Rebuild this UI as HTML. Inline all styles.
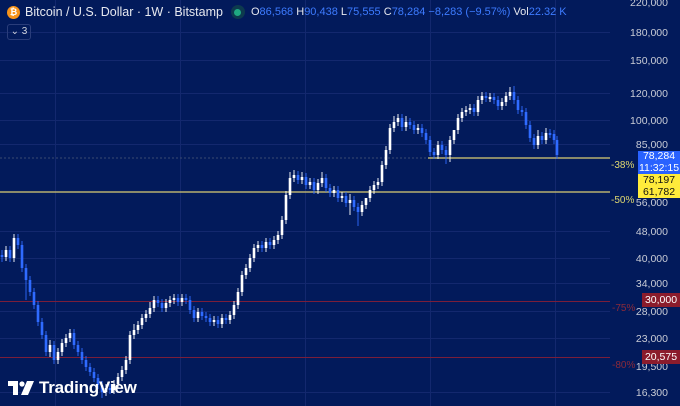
<!DOCTYPE html>
<html><head><meta charset="utf-8"><style>
html,body{margin:0;padding:0}
body{width:680px;height:406px;background:#021a5b;position:relative;overflow:hidden;font-family:"Liberation Sans","DejaVu Sans",sans-serif;color:#d1d4dc}
.hdr{position:absolute;left:7px;top:5px;font-size:12.5px;color:#e6e8ef;white-space:nowrap;display:flex;align-items:center}
.coin{width:13px;height:13px;border-radius:50%;background:#f7931a;color:#fff;font-size:9px;font-weight:bold;text-align:center;line-height:13px;margin-right:5px}
.dot{width:14px;height:14px;border-radius:50%;background:#0d3a4e;display:inline-flex;align-items:center;justify-content:center;margin:0 6px 0 8px}
.dot i{width:7px;height:7px;border-radius:50%;background:#1fa882;display:block}
.v{color:#3d7bff}
.ohl{font-size:11px}
.cnt{position:absolute;left:7px;top:24px;width:22px;height:14px;border:1px solid #2a3d7a;border-radius:3px;font-size:10px;color:#d1d4dc;text-align:center;line-height:14px}
.ax{position:absolute;right:12px;font-size:10.5px;color:#c9ccd6;text-align:right}
.tag{position:absolute;right:0;font-size:10.5px;text-align:center;width:42px}
.pct{position:absolute;font-size:10px}
.logo{position:absolute;left:8px;top:378px;font-size:17px;font-weight:bold;color:#fff;display:flex;align-items:center;letter-spacing:-0.2px}
</style></head><body>
<svg width="680" height="406" style="position:absolute;left:0;top:0">
<g stroke="#13286e" stroke-width="1">
<line x1="0" x2="610" y1="32.5" y2="32.5"/><line x1="0" x2="610" y1="60.5" y2="60.5"/><line x1="0" x2="610" y1="93.5" y2="93.5"/><line x1="0" x2="610" y1="120.5" y2="120.5"/><line x1="0" x2="610" y1="144.5" y2="144.5"/><line x1="0" x2="610" y1="231.5" y2="231.5"/><line x1="0" x2="610" y1="258.5" y2="258.5"/><line x1="0" x2="610" y1="283.5" y2="283.5"/><line x1="0" x2="610" y1="311.5" y2="311.5"/><line x1="0" x2="610" y1="338.5" y2="338.5"/><line x1="0" x2="610" y1="392.5" y2="392.5"/>
<line x1="55.5" x2="55.5" y1="0" y2="406"/><line x1="180.5" x2="180.5" y1="0" y2="406"/><line x1="305.5" x2="305.5" y1="0" y2="406"/><line x1="430.5" x2="430.5" y1="0" y2="406"/><line x1="555.5" x2="555.5" y1="0" y2="406"/>
</g>
<line x1="0" x2="610" y1="301.5" y2="301.5" stroke="#7a1e3a" stroke-width="1"/>
<line x1="0" x2="610" y1="357.5" y2="357.5" stroke="#7a1e3a" stroke-width="1"/>
<line x1="0" x2="428" y1="158" y2="158" stroke="#3a4a70" stroke-width="1" stroke-dasharray="2,2"/>
<line x1="428" x2="610" y1="158" y2="158" stroke="#b8b070" stroke-width="1.5"/>
<line x1="0" x2="610" y1="192" y2="192" stroke="#b8b070" stroke-width="1.5"/>
<path fill="none" stroke="#2f6bff" stroke-width="0.9" d="M2 250V262 M10 246V262 M18 234V249 M22 241V272 M26 264V300 M30 276V296 M34 288V309 M38 301V326 M42 318V339 M46 331V356 M54 341V364 M74 329V349 M78 341V356 M82 348V364 M86 356V371 M90 363V376 M94 368V382 M98 374V389 M102 381V398 M110 384V394 M158 296V307 M162 299V312 M178 294V306 M186 294V304 M190 296V314 M194 306V322 M202 308V320 M206 312V322 M210 314V326 M218 316V328 M226 314V324 M262 241V252 M270 238V249 M298 171V184 M306 173V189 M314 178V194 M326 174V192 M330 184V197 M338 186V202 M346 192V207 M354 196V211 M358 203V226 M402 114V131 M410 118V129 M414 121V134 M422 124V137 M426 129V144 M430 136V156 M434 148V159 M442 141V154 M446 146V164 M474 104V116 M486 92V102 M494 93V104 M498 96V110 M514 86V104 M518 96V114 M522 106V116 M526 108V129 M530 121V142 M534 134V149 M542 132V144 M550 129V138 M554 130V144 M557 136V159"/>
<path fill="none" stroke="#2f6bff" stroke-width="2.6" d="M2 255V257M10 250V258M18 238V245M22 245V268M26 268V280M30 280V292M34 292V305M38 305V322M42 322V335M46 335V352M54 345V360M74 333V345M78 345V352M82 352V360M86 360V367M90 367V372M94 372V378M98 378V385M102 385V392M110 388V390M158 300V303M162 303V308M178 298V302M186 298V300M190 300V310M194 310V318M202 312V316M206 316V318M210 318V322M218 320V324M226 318V320M262 245V248M270 242V245M298 175V180M306 177V185M314 182V190M326 178V188M330 188V193M338 190V198M346 196V203M354 200V207M358 207V212M402 118V127M410 122V125M414 125V130M422 128V133M426 133V140M430 140V152M434 152V155M442 145V150M446 150V155M474 108V112M486 96V98M494 97V100M498 100V106M514 92V100M518 100V110M522 110V112M526 112V125M530 125V138M534 138V145M542 136V140M550 133V135M554 134V140M557 140V155"/>
<path fill="none" stroke="#ffffff" stroke-width="0.9" d="M6 246V261 M14 234V262 M50 340V357 M58 348V364 M62 339V356 M66 334V347 M70 329V342 M106 384V396 M114 380V394 M118 373V388 M122 366V381 M126 356V374 M130 331V364 M134 324V339 M138 321V334 M142 314V329 M146 310V322 M150 302V318 M154 296V312 M166 299V312 M170 296V307 M174 294V304 M182 294V306 M198 308V322 M214 316V326 M222 314V328 M230 311V324 M234 301V319 M238 288V309 M242 271V296 M246 264V279 M250 254V272 M254 244V262 M258 241V252 M266 238V252 M274 236V249 M278 231V244 M282 216V239 M286 191V224 M290 172V199 M294 170V182 M302 172V184 M310 178V189 M318 179V194 M322 172V187 M334 186V197 M342 192V202 M350 194V215 M362 201V216 M366 201V209 M370 186V202 M374 181V194 M378 178V189 M382 161V186 M386 146V169 M390 124V154 M394 116V132 M398 114V126 M406 116V131 M418 124V134 M438 141V159 M450 136V162 M454 136V144 M458 114V134 M462 108V122 M466 106V116 M470 104V114 M478 96V116 M482 92V104 M490 93V102 M502 98V110 M506 92V106 M510 87V100 M538 130V149 M546 128V144"/>
<path fill="none" stroke="#ffffff" stroke-width="2.6" d="M6 257V250M14 258V238M50 352V345M58 360V352M62 352V343M66 343V338M70 338V333M106 392V388M114 390V384M118 384V377M122 377V370M126 370V360M130 360V335M134 335V330M138 330V325M142 325V318M146 318V314M150 314V308M154 308V300M166 308V303M170 303V300M174 300V298M182 302V298M198 318V312M214 322V320M222 324V318M230 320V315M234 315V305M238 305V292M242 292V275M246 275V268M250 268V258M254 258V248M258 248V245M266 248V242M274 245V240M278 240V235M282 235V220M286 220V195M290 195V178M294 178V175M302 180V177M310 185V182M318 190V183M322 183V178M334 193V190M342 198V196M350 203V200M362 212V205M366 205V198M370 198V190M374 190V185M378 185V182M382 182V165M386 165V150M390 150V128M394 128V122M398 122V118M406 127V122M418 130V128M438 155V145M450 155V140M454 140V130M458 130V118M462 118V112M466 112V110M470 110V108M478 112V100M482 100V96M490 99V97M502 106V102M506 102V96M510 96V92M538 145V136M546 140V133"/>
</svg>
<div class="hdr"><span class="coin">₿</span>Bitcoin / U.S. Dollar · 1W · Bitstamp<span class="dot"><i></i></span><span class="ohl">O<span class="v">86,568</span> H<span class="v">90,438</span> L<span class="v">75,555</span> C<span class="v">78,284</span> <span class="v">−8,283 (−9.57%)</span> Vol<span class="v">22.32 K</span></span></div>
<div class="cnt">⌄ 3</div>
<div class="ax" style="top:-3px">220,000</div>
<div class="ax" style="top:27px">180,000</div>
<div class="ax" style="top:55px">150,000</div>
<div class="ax" style="top:88px">120,000</div>
<div class="ax" style="top:115px">100,000</div>
<div class="ax" style="top:139px">85,000</div>
<div class="ax" style="top:197px">56,000</div>
<div class="ax" style="top:226px">48,000</div>
<div class="ax" style="top:253px">40,000</div>
<div class="ax" style="top:278px">34,000</div>
<div class="ax" style="top:306px">28,000</div>
<div class="ax" style="top:333px">23,000</div>
<div class="ax" style="top:361px">19,500</div>
<div class="ax" style="top:387px">16,300</div>
<div class="tag" style="top:151px;height:23px;background:#2962ff;color:#fff;line-height:11.5px">78,284<br>11:32:15</div>
<div class="tag" style="top:174px;height:24px;background:#ffeb3b;color:#111;line-height:12px">78,197<br>61,782</div>
<div class="tag" style="top:293px;height:14px;background:#8b1c2c;color:#fff;line-height:14px;width:38px">30,000</div>
<div class="tag" style="top:350px;height:14px;background:#8b1c2c;color:#fff;line-height:14px;width:38px">20,575</div>
<div class="pct" style="left:611px;top:160px;color:#e0d870">-38%</div>
<div class="pct" style="left:611px;top:195px;color:#e0d870">-50%</div>
<div class="pct" style="left:612px;top:303px;color:#8b2a3a">-75%</div>
<div class="pct" style="left:612px;top:360px;color:#8b2a3a">-80%</div>
<div class="logo"><svg width="26" height="14" viewBox="0 0 26 14" style="margin-right:5px"><path d="M0 0h10v14H5V5H0z" fill="#fff"/><circle cx="14" cy="3" r="2.6" fill="#fff"/><path d="M19 0h7l-6 14h-7z" fill="#fff"/></svg>TradingView</div>
</body></html>
